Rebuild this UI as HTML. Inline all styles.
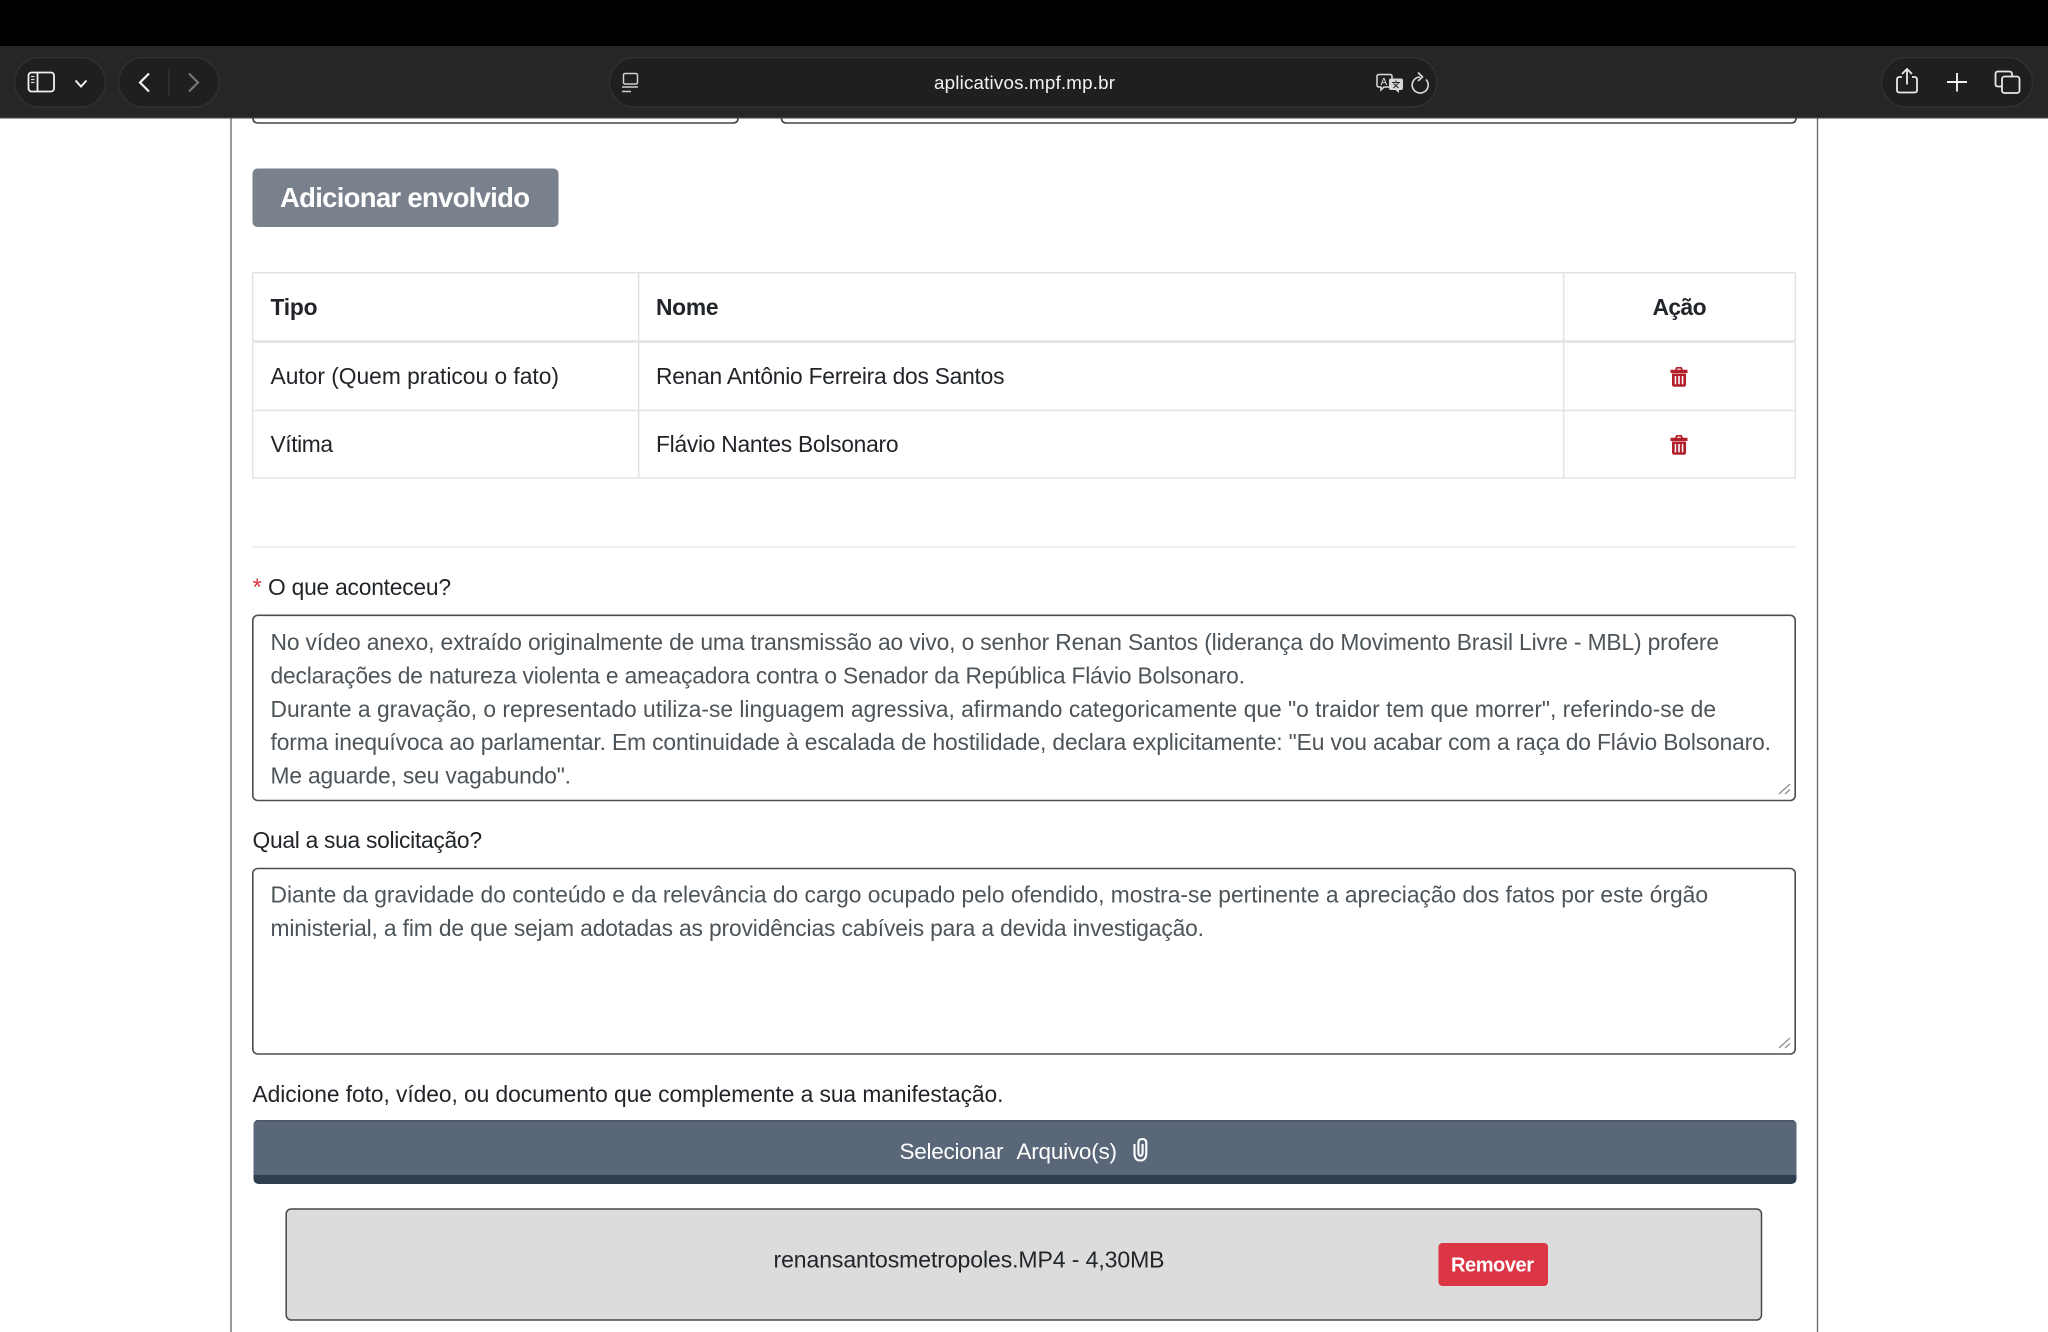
<!DOCTYPE html>
<html lang="pt-BR">
<head>
<meta charset="utf-8">
<title>aplicativos.mpf.mp.br</title>
<style>
html,body{margin:0;padding:0;background:#fff;width:2048px;height:1332px;overflow:hidden}
svg{display:block;position:absolute;left:0;top:0}
text{font-family:"Liberation Sans",sans-serif;font-size:22.8px;fill:#212529}
.ta{fill:#4d5459}
.b{font-weight:700}
</style>
</head>
<body>
<svg width="2048" height="1332" viewBox="0 0 2048 1332" xmlns="http://www.w3.org/2000/svg">
<rect width="2048" height="1332" fill="#fff"/>

<!-- page frame -->
<path d="M231 118V1332M1817.5 118V1332" stroke="#6e6e6e" stroke-width="1.4" fill="none"/>

<!-- cut-off inputs -->
<path d="M253 112V118Q253 123 258 123H733Q738 123 738 118V112" fill="none" stroke="#3f4649" stroke-width="1.6"/>
<path d="M781.5 112V118Q781.5 123 786.5 123H1791Q1796 123 1796 118V112" fill="none" stroke="#3f4649" stroke-width="1.6"/>

<!-- Adicionar envolvido -->
<rect x="252.5" y="168.5" width="306" height="58.5" rx="5" fill="#79818d"/>
<text class="b" x="280" y="207" style="font-size:27.5px;fill:#fff" textLength="250">Adicionar envolvido</text>

<!-- table -->
<g fill="none" stroke="#e0e2e5" stroke-width="1.4">
<rect x="252.7" y="272.7" width="1542.6" height="205.3"/>
<path d="M252 410.5H1796M638.7 272V478M1563.7 272V478"/>
<path d="M252 341.5H1796" stroke-width="2.6"/>
</g>
<text class="b" x="270.5" y="315" textLength="47">Tipo</text>
<text class="b" x="656" y="315" textLength="62.5">Nome</text>
<text class="b" x="1652.5" y="315" textLength="54">Ação</text>
<text x="270.5" y="384" textLength="288.5">Autor (Quem praticou o fato)</text>
<text x="656" y="384" textLength="348.5">Renan Antônio Ferreira dos Santos</text>
<text x="270.5" y="452" textLength="62.5">Vítima</text>
<text x="656" y="452" textLength="242.5">Flávio Nantes Bolsonaro</text>

<!-- trash icons -->
<g fill="#b3202c">
<path d="M1670.5 369.8H1687.5V373H1670.5Z"/>
<path d="M1675 370L1676.2 367H1681.8L1683 370H1681L1680.5 368.6H1677.5L1677 370Z"/>
<path d="M1672 373.5H1686V384.5Q1686 386.7 1684 386.7H1674Q1672 386.7 1672 384.5ZM1674.7 376V384.2H1676.2V376ZM1678.2 376V384.2H1679.8V376ZM1681.8 376V384.2H1683.3V376Z" fill-rule="evenodd"/>
</g>
<g fill="#b3202c" transform="translate(0 68)">
<path d="M1670.5 369.8H1687.5V373H1670.5Z"/>
<path d="M1675 370L1676.2 367H1681.8L1683 370H1681L1680.5 368.6H1677.5L1677 370Z"/>
<path d="M1672 373.5H1686V384.5Q1686 386.7 1684 386.7H1674Q1672 386.7 1672 384.5ZM1674.7 376V384.2H1676.2V376ZM1678.2 376V384.2H1679.8V376ZM1681.8 376V384.2H1683.3V376Z" fill-rule="evenodd"/>
</g>

<path d="M252 547H1796" stroke="#e8e9ea" stroke-width="1.6"/>

<!-- field 1 -->
<text class="b" x="252.5" y="595" style="fill:#dc3545;font-weight:400;font-size:24px" textLength="10">*</text>
<text x="268" y="595" textLength="183">O que aconteceu?</text>
<rect x="252.8" y="615.3" width="1542.4" height="185.2" rx="5" fill="#fff" stroke="#4a4f54" stroke-width="1.6"/>
<text class="ta" x="270.5" y="650" textLength="1448.5">No vídeo anexo, extraído originalmente de uma transmissão ao vivo, o senhor Renan Santos (liderança do Movimento Brasil Livre - MBL) profere</text>
<text class="ta" x="270.5" y="683.4" textLength="974.5">declarações de natureza violenta e ameaçadora contra o Senador da República Flávio Bolsonaro.</text>
<text class="ta" x="270.5" y="716.8" textLength="1445.5">Durante a gravação, o representado utiliza-se linguagem agressiva, afirmando categoricamente que "o traidor tem que morrer", referindo-se de</text>
<text class="ta" x="270.5" y="750.2" textLength="1500.5">forma inequívoca ao parlamentar. Em continuidade à escalada de hostilidade, declara explicitamente: "Eu vou acabar com a raça do Flávio Bolsonaro.</text>
<text class="ta" x="270.5" y="783.6" textLength="300.5">Me aguarde, seu vagabundo".</text>
<path d="M1779 794L1790 784M1785 794L1790 789.5" stroke="#8a8f94" stroke-width="1.3" fill="none"/>

<!-- field 2 -->
<text x="252.5" y="848" textLength="229.5">Qual a sua solicitação?</text>
<rect x="252.8" y="868.5" width="1542.4" height="185.5" rx="5" fill="#fff" stroke="#4a4f54" stroke-width="1.6"/>
<text class="ta" x="270.5" y="902.7" textLength="1437.5">Diante da gravidade do conteúdo e da relevância do cargo ocupado pelo ofendido, mostra-se pertinente a apreciação dos fatos por este órgão</text>
<text class="ta" x="270.5" y="936" textLength="933.5">ministerial, a fim de que sejam adotadas as providências cabíveis para a devida investigação.</text>
<path d="M1779 1048L1790 1038M1785 1048L1790 1043.5" stroke="#8a8f94" stroke-width="1.3" fill="none"/>

<!-- upload -->
<text x="252.5" y="1102" textLength="751">Adicione foto, vídeo, ou documento que complemente a sua manifestação.</text>
<rect x="253.5" y="1120" width="1543" height="64" rx="5" fill="#2c3e50"/>
<path d="M253.5 1175V1125Q253.5 1120 258.5 1120H1791.5Q1796.5 1120 1796.5 1125V1175Z" fill="#5a6778"/>
<path d="M256 1120.8H1794" stroke="#4a5666" stroke-width="1.4"/>
<text x="899.5" y="1159" style="font-size:22.5px;fill:#fff" textLength="104">Selecionar</text>
<text x="1016.5" y="1159" style="font-size:22.5px;fill:#fff" textLength="100.5">Arquivo(s)</text>
<path d="M1134.5 1144V1153Q1134.5 1160.5 1140.2 1160.5Q1146.3 1160.5 1146.3 1153V1143Q1146.3 1139 1142.3 1139Q1138.4 1139 1138.4 1143V1152Q1138.4 1155.8 1140.4 1155.8Q1142.6 1155.8 1142.6 1152V1144" fill="none" stroke="#fff" stroke-width="2.1"/>

<!-- file row -->
<rect x="286.2" y="1209" width="1475.3" height="111" rx="5" fill="#dcdcdc" stroke="#45484c" stroke-width="1.5"/>
<text x="773.5" y="1267.5" style="font-size:23px" textLength="391">renansantosmetropoles.MP4 - 4,30MB</text>
<rect x="1438.5" y="1243" width="109.5" height="43" rx="4" fill="#dc3545"/>
<text class="b" x="1451" y="1271.5" style="font-size:20px;fill:#fff" textLength="83">Remover</text>

<!-- browser chrome -->
<rect x="0" y="0" width="2048" height="46" fill="#000"/>
<rect x="0" y="46" width="2048" height="72.5" fill="#272525"/>
<rect x="0" y="117" width="2048" height="1.5" fill="#3a3d3d"/>

<g fill="#201e1e" stroke="#323030" stroke-width="1.5">
<rect x="14.5" y="57.5" width="91" height="49.5" rx="24.7"/>
<rect x="118.5" y="57.5" width="100.5" height="49.5" rx="24.7"/>
<rect x="609.5" y="57.5" width="827.5" height="49.5" rx="24.7"/>
<rect x="1881.5" y="57.5" width="151" height="49.5" rx="24.7"/>
</g>

<!-- sidebar icon -->
<rect x="28.5" y="72.5" width="25.5" height="19" rx="3" fill="none" stroke="#f1f1f1" stroke-width="1.8"/>
<path d="M37.5 72.5V91.5" stroke="#f1f1f1" stroke-width="1.8"/>
<path d="M31 76.5H34.5M31 79.5H34.5M31 82.5H34.5" stroke="#d8d8d8" stroke-width="1.3"/>
<!-- chevron down -->
<path d="M75.5 80.5L81 86.5L86.5 80.5" fill="none" stroke="#f1f1f1" stroke-width="2"/>
<!-- back/forward -->
<path d="M149 73.5L140 82.5L149 91.5" fill="none" stroke="#f1f1f1" stroke-width="2.2"/>
<path d="M169 69V96" stroke="#363434" stroke-width="1.3"/>
<path d="M189 73.5L198 82.5L189 91.5" fill="none" stroke="#777" stroke-width="2.2"/>

<!-- reader icon -->
<rect x="623.5" y="73.5" width="14" height="10.5" rx="1.5" fill="none" stroke="#cfcfcf" stroke-width="1.5"/>
<path d="M622 87H638M622 91.5H631" stroke="#cfcfcf" stroke-width="1.5"/>

<text x="934" y="89" style="font-size:18.8px;fill:#f2f2f2" textLength="181">aplicativos.mpf.mp.br</text>

<!-- translate icon -->
<path d="M1379 74.5H1390Q1392 74.5 1392 76.5V85Q1392 87 1390 87H1384L1381 90V87H1379Q1377 87 1377 85V76.5Q1377 74.5 1379 74.5Z" fill="#201e1e" stroke="#dcdcdc" stroke-width="1.5"/>
<text x="1380.5" y="85" style="font-size:10px;fill:#e5e5e5">A</text>
<path d="M1391 78.5H1401Q1403 78.5 1403 80.5V88Q1403 90 1401 90H1399V93L1395.5 90H1391Q1389 90 1389 88V80.5Q1389 78.5 1391 78.5Z" fill="#d8d8d8"/>
<path d="M1392 82.5H1400M1396 80.5V82.5M1393.5 88L1398.5 83M1393.5 83.5L1398.5 88" stroke="#2a2828" stroke-width="1.1" fill="none"/>

<!-- reload -->
<path d="M1426 79.5A8 8 0 1 1 1420 77" fill="none" stroke="#dcdcdc" stroke-width="1.6"/>
<path d="M1418 72.5L1422.5 77L1418 81" fill="none" stroke="#dcdcdc" stroke-width="1.6"/>

<!-- share -->
<path d="M1902 77H1899.5Q1897 77 1897 79.5V90Q1897 92.5 1899.5 92.5H1914.5Q1917 92.5 1917 90V79.5Q1917 77 1914.5 77H1912" fill="none" stroke="#e8e8e8" stroke-width="1.8"/>
<path d="M1907 84.5V69.5M1902 74L1907 69L1912 74" fill="none" stroke="#e8e8e8" stroke-width="1.8"/>
<!-- plus -->
<path d="M1947 82H1967M1957 73V91.5" stroke="#f1f1f1" stroke-width="1.9"/>
<!-- tabs -->
<path d="M2002 86.5H1998Q1995.5 86.5 1995.5 84V74Q1995.5 71.5 1998 71.5H2009Q2012 71.5 2012 74V76.5" fill="none" stroke="#e8e8e8" stroke-width="1.8"/>
<rect x="2002" y="76.5" width="17.5" height="16.5" rx="2.5" fill="none" stroke="#e8e8e8" stroke-width="1.8"/>
</svg>
</body>
</html>
